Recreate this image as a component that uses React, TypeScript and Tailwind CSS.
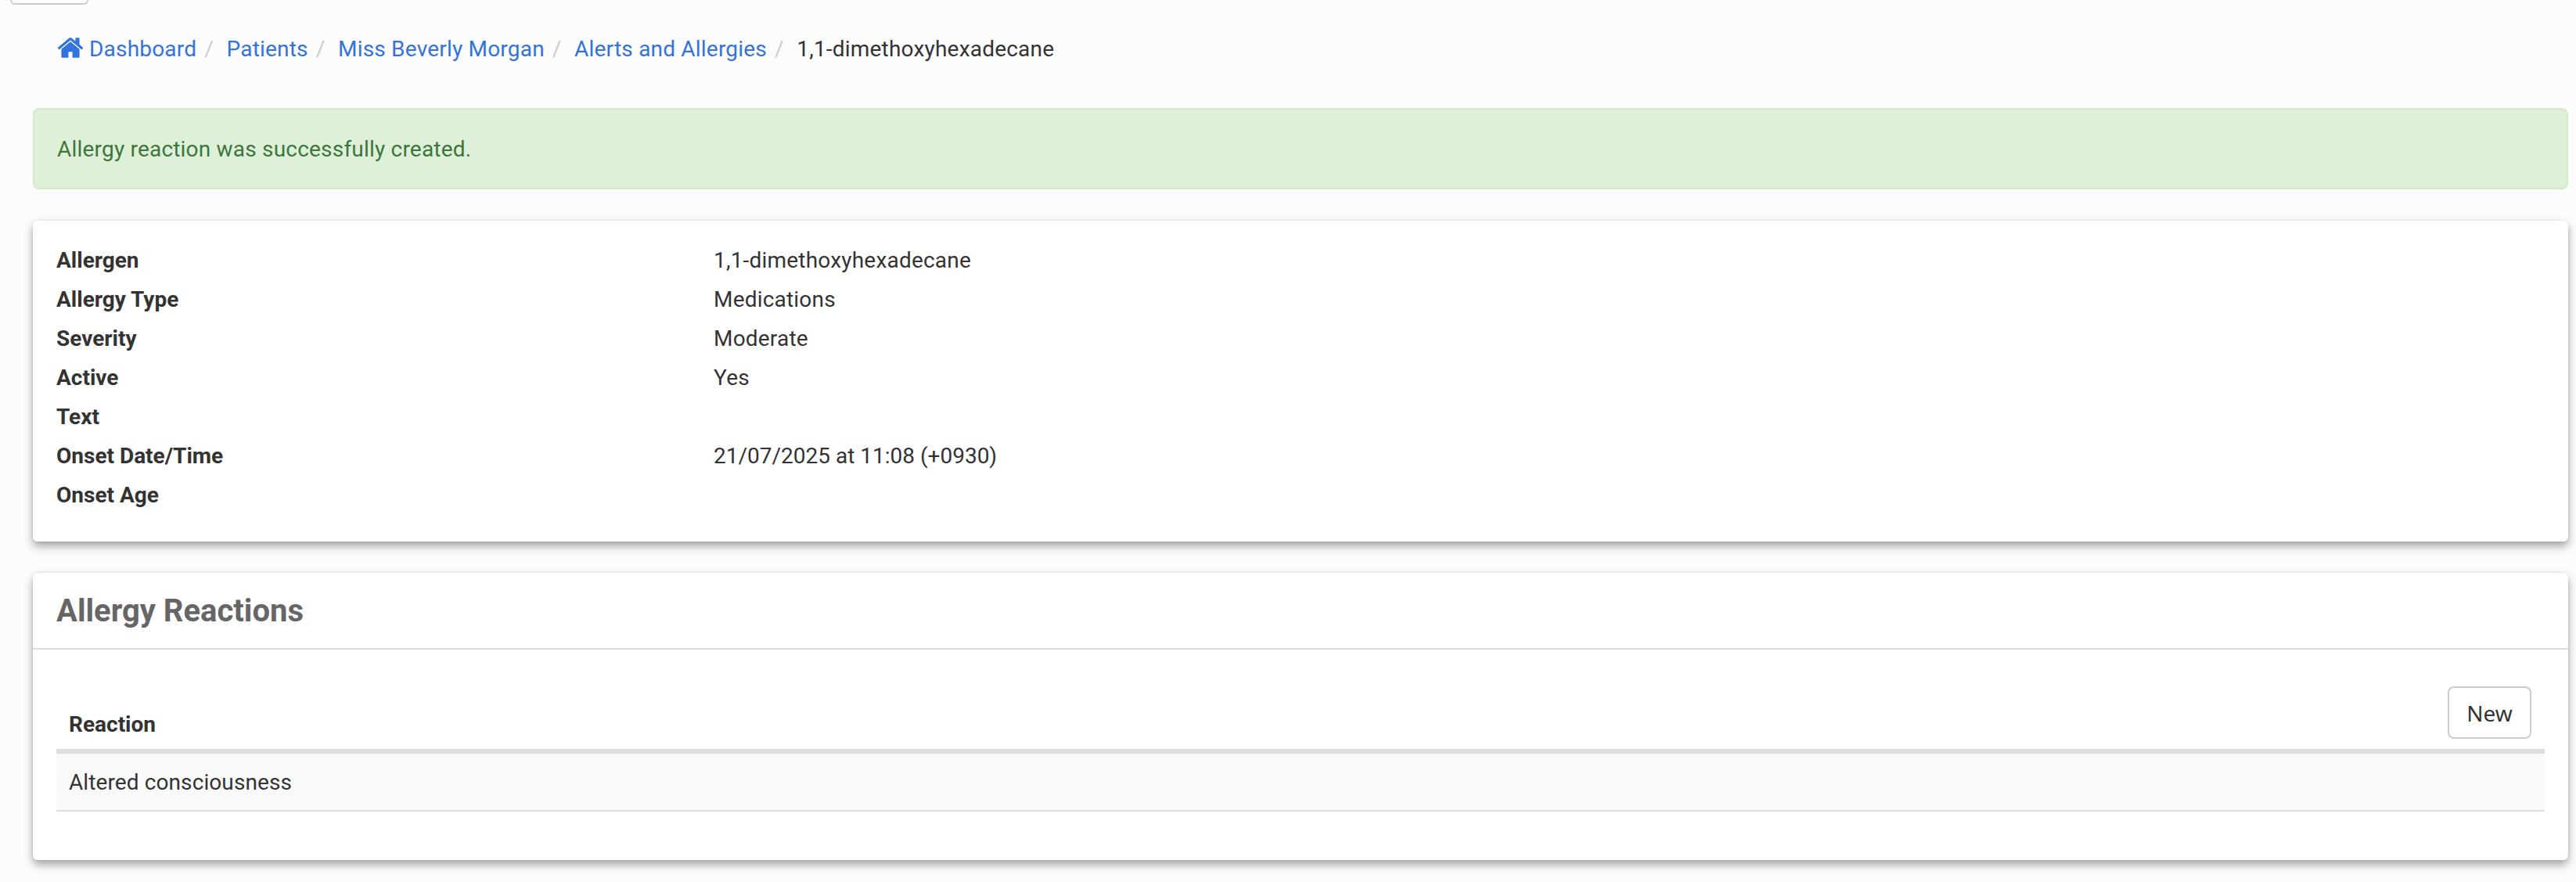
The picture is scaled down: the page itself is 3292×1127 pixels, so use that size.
import React from "react";

const rows: [string, string, boolean][] = [
  ["Allergen", "1,1-dimethoxyhexadecane", true],
  ["Allergy Type", "Medications", true],
  ["Severity", "Moderate", true],
  ["Active", "Yes", true],
  ["Text", "", true],
  ["Onset Date/Time", "21/07/2025 at 11:08 (+0930)", false],
  ["Onset Age", "", true],
];

const crumbs = ["Patients", "Miss Beverly Morgan", "Alerts and Allergies"];

function Sep() {
  return <span className="pl-[10px] pr-[16.5px] text-[#ccc]">/</span>;
}

function HomeIcon() {
  return (
    <svg viewBox="0 0 1792 1792" className="-ml-[1px] mr-[6px] mb-[4px] h-[36px] w-[36px] fill-[#3273dc]">
      <path d="M1472 992v480q0 26-19 45t-45 19h-384v-384h-256v384h-384q-26 0-45-19t-19-45v-480q0-1 .5-3t.5-3l575-474 575 474q1 2 1 6zm223-69l-62 74q-8 9-21 11h-3q-13 0-21-7l-692-577-692 577q-12 8-24 7-13-2-21-11l-62-74q-8-10-7-23.5t11-21.5l719-599q32-26 76-26t76 26l244 204v-195q0-14 9-23t23-9h192q14 0 23 9t9 23v408l219 182q10 8 11 21.5t-7 23.5z" />
    </svg>
  );
}

export default function App() {
  return (
    <div className="h-[1127px] overflow-hidden bg-[#fcfcfc] text-[28px] leading-[50px] text-[#333] font-['Roboto',sans-serif]">
      <div className="ml-[13px] h-[6px] w-[100px] rounded-b-[8px] border-2 border-t-0 border-[#ccc]" />
      <nav className="mt-[32px] ml-[73px] flex h-[50px] items-center tracking-[0.2px]">
        <HomeIcon />
        <a className="text-[#3273dc]">Dashboard</a>
        <Sep />
        {crumbs.map((c) => (
          <React.Fragment key={c}>
            <a className="text-[#3273dc]">{c}</a>
            <Sep />
          </React.Fragment>
        ))}
        <span>1,1-dimethoxyhexadecane</span>
      </nav>

      <div className="mt-[50px] ml-[42px] mr-[10px] flex h-[104px] items-center rounded-[8px] border-2 border-[#d6e9c6] bg-[#dff0d8] pl-[29px] pt-[1px] tracking-[0.2px] text-[#3c763d]">
        Allergy reaction was successfully created.
      </div>

      <section className="mt-[40px] ml-[42px] mr-[10px] h-[410px] rounded-[6px] bg-white pt-[26px] pl-[30px] shadow-[0_6px_12px_rgba(0,0,0,0.35),0_0_4px_rgba(0,0,0,0.08)]">
        {rows.map(([k, v, spaced]) => (
          <div key={k} className="grid h-[50px] grid-cols-[840px_1fr]">
            <div className="font-bold">{k}</div>
            <div className={spaced ? "tracking-[0.2px]" : ""}>{v}</div>
          </div>
        ))}
      </section>

      <section className="mt-[40px] ml-[42px] mr-[10px] h-[367px] rounded-[6px] bg-white shadow-[0_6px_12px_rgba(0,0,0,0.35),0_0_4px_rgba(0,0,0,0.08)]">
        <div className="flex h-[98px] items-center border-b-2 border-[#ddd] pl-[30px] pt-[2px]">
          <h2 className="text-[40px] font-bold text-[#666]">Allergy Reactions</h2>
        </div>
        <div className="mr-[30px] ml-[30px]">
          <div className="flex h-[133px] items-end justify-between border-b-[6px] border-[#ddd] pl-[16px] pr-[17px]">
            <div className="mb-[6px] font-bold">Reaction</div>
            <button className="mb-[13px] h-[67px] w-[107px] rounded-[8px] border-2 border-[#ccc] bg-white text-[28px] font-['Noto_Sans',sans-serif] text-[#333]">
              New
            </button>
          </div>
          <div className="flex h-[74px] items-center border-b-2 border-[#ddd] bg-[#f9f9f9] pl-[16px] pt-[1px] tracking-[0.1px]">
            Altered consciousness
          </div>
        </div>
      </section>
    </div>
  );
}
